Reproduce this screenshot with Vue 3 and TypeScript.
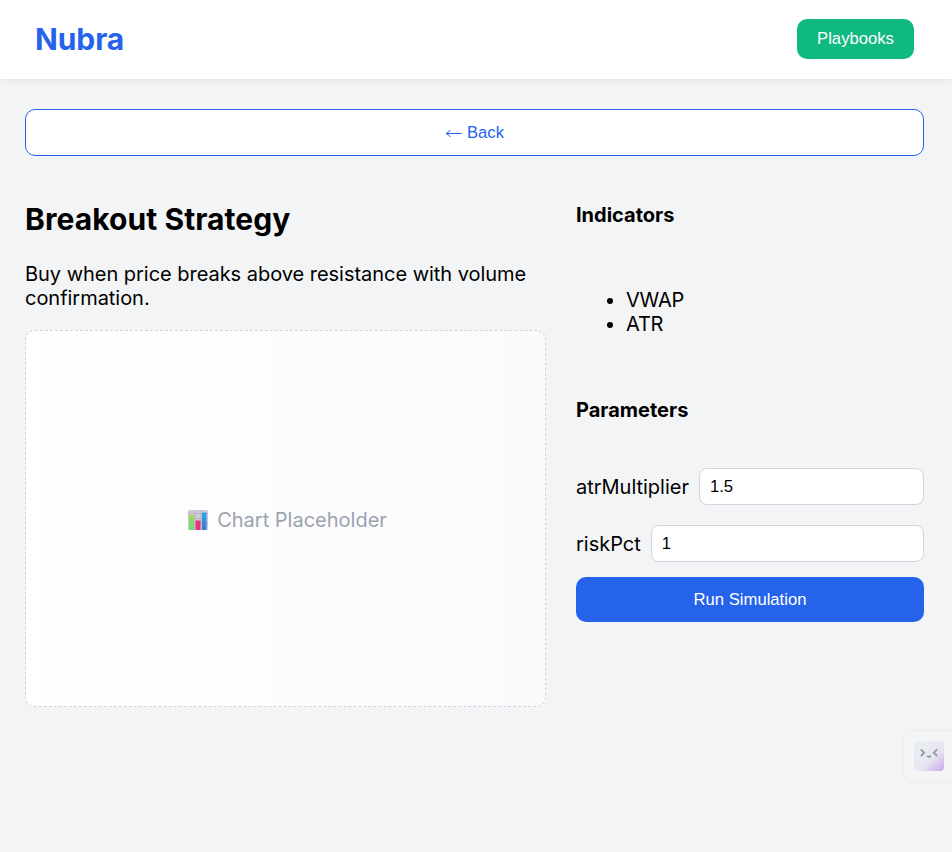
<script setup lang="ts">
import { reactive } from 'vue'

interface Param {
  name: string
  value: string
}

const indicators: string[] = ['VWAP', 'ATR']
const params = reactive<Param[]>([
  { name: 'atrMultiplier', value: '1.5' },
  { name: 'riskPct', value: '1' },
])
</script>

<template>
  <div class="app">
    <header class="topbar">
      <div class="logo">Nubra</div>
      <button class="btn playbooks" type="button">Playbooks</button>
    </header>

    <main class="content">
      <button class="btn back" type="button">
        <svg class="arrow" viewBox="0 0 17 12" aria-hidden="true">
          <path d="M16.5 6.5H1.2M5.2 3Q4 5.6 1 6.5Q4 7.4 5.2 10" />
        </svg>
        <span>Back</span>
      </button>

      <div class="detail">
        <section class="strategy">
          <h2>Breakout Strategy</h2>
          <p>Buy when price breaks above resistance with volume confirmation.</p>
          <div class="chart">
            <svg class="chart-icon" viewBox="0 0 20 20" aria-hidden="true">
              <defs>
                <linearGradient id="bar-green" x1="0" y1="0" x2="0" y2="1">
                  <stop offset="0" stop-color="#a7d65b" />
                  <stop offset="1" stop-color="#61e27d" />
                </linearGradient>
                <linearGradient id="bar-blue" x1="0" y1="0" x2="0" y2="1">
                  <stop offset="0" stop-color="#2da5ef" />
                  <stop offset="1" stop-color="#3b78cf" />
                </linearGradient>
              </defs>
              <rect width="20" height="20" rx="1.8" fill="#cfc9d8" />
              <path d="M0 3.5H20M0 8.5H20M0 13.5H20M7 0V20M13.2 0V20" stroke="#b5aebf" stroke-width="0.8" />
              <rect x="1" y="5" width="5" height="15" fill="url(#bar-green)" />
              <rect x="7.5" y="10.5" width="5" height="9.5" fill="#e8347a" />
              <rect x="14" y="2.5" width="4.5" height="17.5" fill="url(#bar-blue)" />
            </svg>
            <span>Chart Placeholder</span>
          </div>
        </section>

        <aside class="settings">
          <h4>Indicators</h4>
          <ul>
            <li v-for="name in indicators" :key="name">{{ name }}</li>
          </ul>
          <h4>Parameters</h4>
          <div class="params">
            <label v-for="param in params" :key="param.name" class="param">
              <span>{{ param.name }}</span>
              <input v-model="param.value" type="text" />
            </label>
          </div>
          <button class="btn run" type="button">Run Simulation</button>
        </aside>
      </div>
    </main>

    <div class="assistant">
      <svg viewBox="0 0 30 30" aria-hidden="true">
        <defs>
          <linearGradient id="face" x1="0.25" y1="0.2" x2="1" y2="1">
            <stop offset="0" stop-color="#e9edf2" />
            <stop offset="0.5" stop-color="#e7e3f1" />
            <stop offset="1" stop-color="#c9a5e8" />
          </linearGradient>
        </defs>
        <rect width="30" height="30" rx="4" fill="url(#face)" />
        <path d="M6.8 8.5L10.2 11.7L6.8 15M23.2 8.5L19.8 11.7L23.2 15M13.2 14.8Q15 16.6 17 14.8" />
      </svg>
    </div>
  </div>
</template>

<style>
body {
  margin: 0;
  background: #f3f4f6;
}
</style>

<style scoped>
.app {
  min-height: 852px;
  color: #000;
  font: 20px/24px Inter, "Liberation Sans", sans-serif;
}

.topbar {
  display: flex;
  align-items: center;
  justify-content: space-between;
  box-sizing: border-box;
  height: 79px;
  padding: 0 38px 2px 35px;
  background: #fff;
  box-shadow: 0 2px 6px rgba(0, 0, 0, 0.06);
}

.logo {
  color: #2563eb;
  font-size: 30px;
  font-weight: 700;
  line-height: 36px;
  letter-spacing: -0.1px;
}

.btn {
  display: flex;
  align-items: center;
  justify-content: center;
  box-sizing: border-box;
  margin: 0;
  padding: 0;
  border: 0;
  border-radius: 10px;
  font: 16.67px/19px "Liberation Sans", Arial, sans-serif;
}

.playbooks {
  width: 117px;
  height: 40px;
  padding-bottom: 1px;
  background: #10b981;
  color: #fff;
}

.content {
  padding: 30px 28px 0 25px;
}

.back {
  width: 100%;
  height: 47px;
  gap: 5px;
  border: 1px solid #2563eb;
  background: #fff;
  color: #2563eb;
}

.arrow {
  width: 17px;
  height: 12px;
  margin-top: 1px;
  fill: none;
  stroke: currentColor;
  stroke-width: 1;
}

.detail {
  display: grid;
  grid-template-columns: 521px minmax(0, 1fr);
  gap: 30px;
  padding-top: 45px;
}

h2 {
  margin: 0 0 25px;
  font-size: 30px;
  font-weight: 700;
  line-height: 36px;
  letter-spacing: 0.07px;
}

p {
  margin: 0 0 20px;
  letter-spacing: -0.03px;
}

.chart {
  display: flex;
  align-items: center;
  justify-content: center;
  gap: 9px;
  box-sizing: border-box;
  height: 377px;
  padding: 3px 0 0 4px;
  border: 1px dashed #d1d5db;
  border-radius: 10px;
  background: linear-gradient(90deg, #fff, #f9fafb);
  color: #9ca3af;
}

.chart-icon {
  width: 20px;
  height: 20px;
}

.settings {
  padding-top: 2px;
}

h4 {
  margin: 0;
  font-size: 20px;
  font-weight: 700;
}

ul {
  margin: 61px 0 62px;
  padding-left: 50px;
  letter-spacing: -0.2px;
}

.params {
  display: flex;
  flex-direction: column;
  gap: 20px;
  margin: 46px 0 15px;
}

.param {
  display: flex;
  align-items: center;
  gap: 10px;
  letter-spacing: -0.02px;
}

input {
  flex: 1;
  min-width: 0;
  box-sizing: border-box;
  height: 37px;
  margin: 0;
  padding: 0 10px;
  border: 1px solid #d1d5db;
  border-radius: 8px;
  background: #fff;
  color: #000;
  font: 16.67px "Liberation Sans", Arial, sans-serif;
}

.run {
  width: 100%;
  height: 45px;
  background: #2563eb;
  color: #fff;
}

/* Floating widget docked to the right edge of the window */
.assistant {
  position: fixed;
  top: 732px;
  right: 0;
  box-sizing: border-box;
  width: 48px;
  height: 49px;
  padding: 9px 8px 10px 10px;
  border-radius: 8px 0 0 8px;
  background: #f4f5f7;
  box-shadow: 0 0 4px rgba(0, 0, 0, 0.05);
}

.assistant svg {
  display: block;
  width: 30px;
  height: 30px;
}

.assistant path {
  fill: none;
  stroke: #959aa5;
  stroke-width: 1.8;
}
</style>
